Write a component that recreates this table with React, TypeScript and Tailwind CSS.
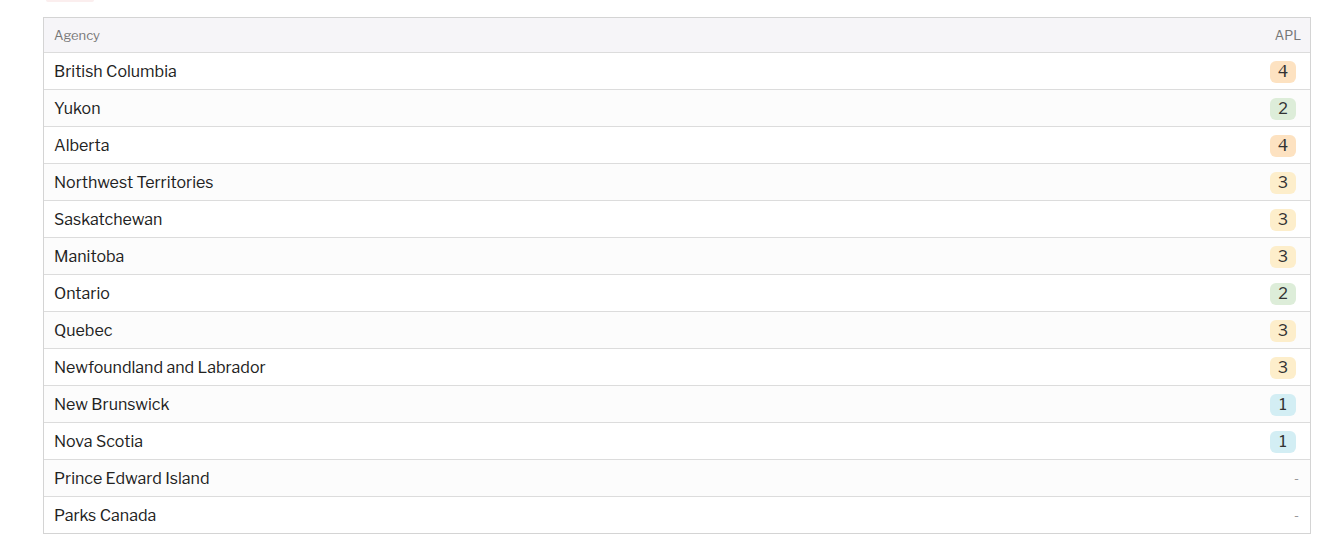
import React from 'react';

type Row = { agency: string; apl: number | null };

const rows: Row[] = [
  { agency: 'British Columbia', apl: 4 },
  { agency: 'Yukon', apl: 2 },
  { agency: 'Alberta', apl: 4 },
  { agency: 'Northwest Territories', apl: 3 },
  { agency: 'Saskatchewan', apl: 3 },
  { agency: 'Manitoba', apl: 3 },
  { agency: 'Ontario', apl: 2 },
  { agency: 'Quebec', apl: 3 },
  { agency: 'Newfoundland and Labrador', apl: 3 },
  { agency: 'New Brunswick', apl: 1 },
  { agency: 'Nova Scotia', apl: 1 },
  { agency: 'Prince Edward Island', apl: null },
  { agency: 'Parks Canada', apl: null },
];

const badgeClass: Record<number, string> = {
  1: 'bg-[#d3eef4]',
  2: 'bg-[#ddedd9]',
  3: 'bg-[#fdeecb]',
  4: 'bg-[#fde2c1]',
};

const Badge: React.FC<{ value: number | null }> = ({ value }) => {
  if (value === null) {
    return <span className="-mr-[3px] text-[13px] text-[#999]">-</span>;
  }
  return (
    <span
      className={`inline-flex h-[22px] w-[26px] items-center justify-center rounded-[6px] text-[16px] text-[#333] ${badgeClass[value]}`}
    >
      {value}
    </span>
  );
};

export default function App() {
  return (
    <div
      className="min-h-screen bg-white pl-[43px] pr-[17px]"
      style={{ fontFamily: '"Libre Franklin", Lato, "Open Sans", sans-serif' }}
    >
      <div className="ml-[3px] h-[2px] w-[48px] rounded-b-[4px] bg-[#fbeeee]" />
      <div className="mt-[15px] border border-[#d4d4d4]">
        <div className="flex h-[35px] items-center justify-between border-b border-[#dcdcdc] bg-[#f6f5f8] px-[10px] pt-[2px] text-[13px] text-[#777]">
          <span>Agency</span>
          <span className="-mr-[1px]">APL</span>
        </div>
        {rows.map((r, i) => {
          const last = i === rows.length - 1;
          return (
            <div
              key={r.agency}
              className={`flex items-center justify-between px-[10px] pt-[2px] pr-[14px] text-[16px] text-[#222] ${
                last ? 'h-[36px]' : 'h-[37px] border-b border-[#dcdcdc]'
              } ${i % 2 === 0 ? 'bg-white' : 'bg-[#fcfcfc]'}`}
            >
              <span>{r.agency}</span>
              <Badge value={r.apl} />
            </div>
          );
        })}
      </div>
    </div>
  );
}
